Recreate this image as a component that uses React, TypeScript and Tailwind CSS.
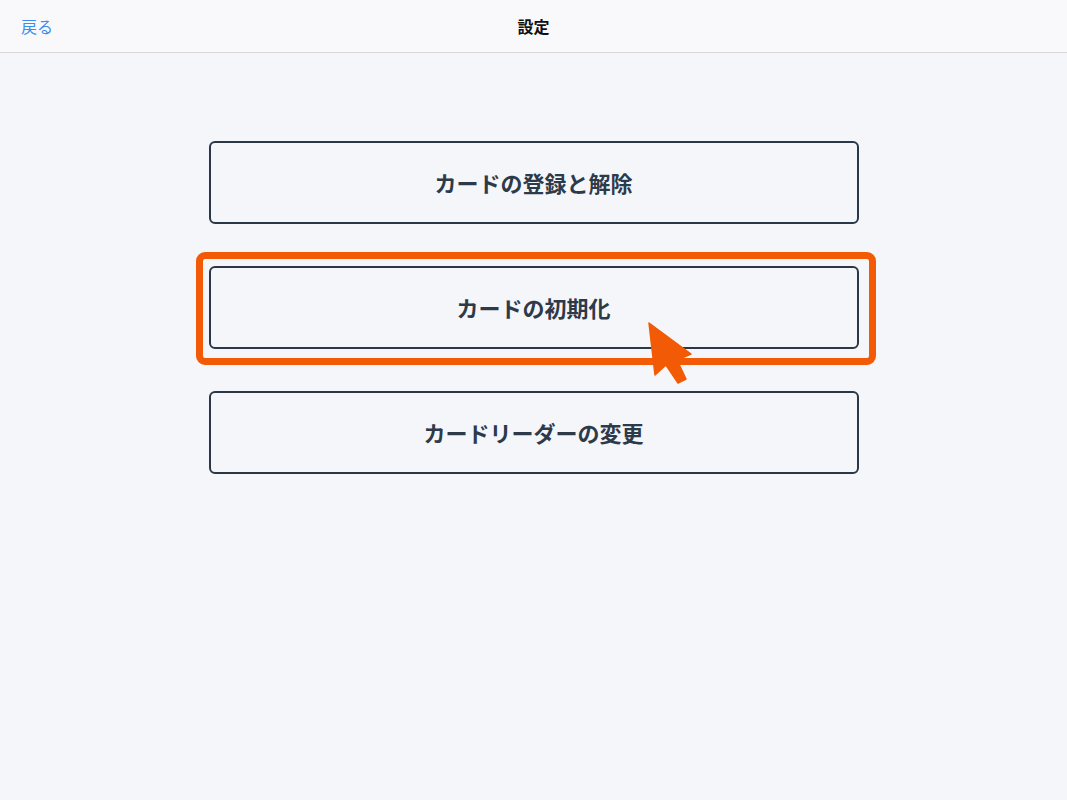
import React from "react";

const font = { fontFamily: '"Noto Sans CJK JP", "Noto Sans", sans-serif' };

function Btn({ label }: { label: string }) {
  return (
    <button className="w-[650px] h-[83px] rounded-[6px] border-2 border-[#2a3747] bg-transparent text-[22px] font-bold text-[#2d3a4a] flex items-center justify-center">
      {label}
    </button>
  );
}

export default function App() {
  return (
    <div className="w-[1067px] h-[800px] bg-[#f5f6fa] flex flex-col" style={font}>
      <header className="h-[53px] bg-[#f9f9fb] border-b border-[#d6d6d9] flex items-center relative shrink-0">
        <span className="pl-[21px] text-[16px] text-[#3a8ef0]">戻る</span>
        <span className="absolute left-1/2 -translate-x-1/2 text-[16px] font-bold text-[#111]">設定</span>
      </header>
      <main className="flex flex-col items-center pt-[88px] gap-[42px]">
        <Btn label="カードの登録と解除" />
        <div className="relative">
          <div className="absolute left-[-13px] top-[-14px] right-[-17px] bottom-[-16px] border-[7px] border-[#f25a05] rounded-[9px] pointer-events-none" />
          <Btn label="カードの初期化" />
          <svg
            className="absolute left-[432px] top-[49px]"
            width="55"
            height="75"
            viewBox="0 0 55 75"
          >
            <polygon
              points="8,8 14,60 25,50 37,68 45,64 36,45 50,39"
              fill="#f25a05"
              stroke="#f25a05"
              strokeWidth="1.5"
              strokeLinejoin="round"
            />
          </svg>
        </div>
        <Btn label="カードリーダーの変更" />
      </main>
    </div>
  );
}
